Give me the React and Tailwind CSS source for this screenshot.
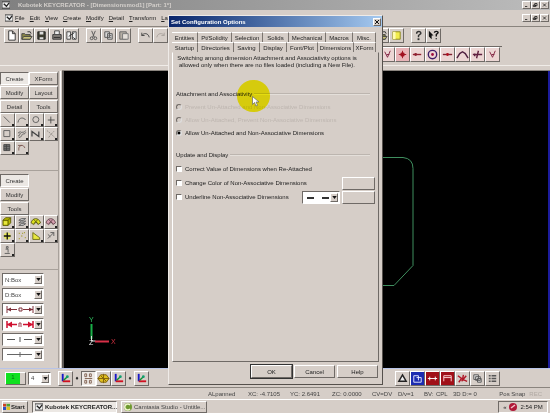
const EDGES = 'border border-t-white border-l-white border-r-[#6f6a66] border-b-[#6f6a66]';
const RAISED = `${EDGES} bg-[#d6cec8]`;
const SUNKEN = 'border border-t-[#6f6a66] border-l-[#6f6a66] border-r-white border-b-white';

const MENUS = ['File', 'Edit', 'View', 'Create', 'Modify', 'Detail', 'Transform', 'Layout'];

const TABS_BACK = [
  ['Entities', 'w-[26px]'],
  ['Pt/Solidity', 'w-[34px]'],
  ['Selection', 'w-[31px]'],
  ['Solids', 'w-[26px]'],
  ['Mechanical', 'w-[37px]'],
  ['Macros', 'w-[27px]'],
  ['Misc.', 'w-[23px]'],
];

const TABS_FRONT = [
  ['Startup', 'w-[26px]'],
  ['Directories', 'w-[36px]'],
  ['Saving', 'w-[26px]'],
  ['Display', 'w-[27px]'],
  ['Font/Plot', 'w-[31px]'],
  ['Dimensions', 'w-[36px]'],
  ['XForm', 'w-[22px]'],
];

// All glyphs are drawn on a 14x14 grid
const GLYPHS = {
  newFile: <path d="M4 2h4l3 3v7H4z M8 2v3h3" fill="#fff" stroke="#333" />,
  open: <><path d="M2 5h3l1 1h5v5H2z" fill="#8d8848" stroke="#444" /><path d="M4 8h9l-2 3H2z" fill="#c9c27a" stroke="#444" /><path d="M8 3h3l1 2" stroke="#333" fill="none" /></>,
  save: <><path d="M3 3h8v8H3z" fill="#3c3c30" stroke="#222" /><path d="M5 3h4v3H5z M5 9h4v2H5z" fill="#ddd" /></>,
  print: <><path d="M3 6h9v5H3z" fill="#8a8580" stroke="#333" /><path d="M5 2h5v4H5z" fill="#eee" stroke="#444" /><path d="M4 9h7" stroke="#222" /></>,
  pages: <><path d="M2 3h4v8H2z M8 3h4v8H8z" fill="#eee" stroke="#444" /><path d="M4 8l6-4M9 9l2 2" stroke="#333" /></>,
  cut: <><path d="M5 2l3 7M9 2L6 9" stroke="#555" fill="none" /><circle cx="5" cy="10" r="1.5" fill="none" stroke="#555" /><circle cx="9" cy="10" r="1.5" fill="none" stroke="#555" /></>,
  copy: <><path d="M3 3h5v6H3z M6 5h5v6H6z" fill="#d8d8d8" stroke="#555" /><path d="M7 7h3M7 9h3" stroke="#666" /></>,
  paste: <><path d="M3 3h7v8H3z" fill="#b5aea4" stroke="#666" /><path d="M6 5h6v6H6z" fill="#e5e0da" stroke="#777" /></>,
  undo: <path d="M3 7c2-3 7-3 8 2M3 4v3h3" stroke="#444" fill="none" />,
  redo: <path d="M11 7c-2-3-7-3-8 2M11 4v3H8" stroke="#aaa39d" fill="none" />,
  yellowPage: <><path d="M3 3h8v8H3z" fill="#f2ec4a" stroke="#8a8520" /><path d="M3 3h3v8H3z" fill="#fffbb0" /></>,
  help: <><path d="M5 5c0-3 5-3 4.500 0L7 7v2" stroke="#333" strokeWidth="1.500" fill="none" /><path d="M6 10h2v2H6z" fill="#333" /></>,
  whatsThis: <><path d="M2 2l5 5H5v4L2 8z" fill="#111" /><path d="M8 4c0-2 4-2 4 0L10 6v2M10 10v1" stroke="#111" strokeWidth="1.500" fill="none" /></>,
  snapPoint: <><circle cx="7" cy="7" r="2.500" fill="#a01020" /><path d="M7 3v8M3 7h8" stroke="#a01020" /></>,
  snapEnd: <><path d="M2 7h9" stroke="#902030" strokeWidth="1.500" /><circle cx="5" cy="7" r="1.500" fill="#902030" /></>,
  snapCircle: <><circle cx="7" cy="7" r="4.500" stroke="#40206a" fill="none" strokeWidth="1.500" /><circle cx="7" cy="7" r="1.500" fill="#a01040" /></>,
  snapMid: <><path d="M2 7h10" stroke="#802030" strokeWidth="1.500" /><circle cx="7" cy="7" r="1.500" fill="#b01020" /></>,
  snapCurve: <path d="M1 11l3-5 3-2 3 2 3 5" stroke="#502040" strokeWidth="1.500" fill="none" />,
  snapCross: <path d="M2 7h10M8 3L6 11M4 6v3" stroke="#602040" strokeWidth="1.500" fill="none" />,
  snapPerp: <path d="M4 4l3 6 3-7M6 7h3" stroke="#802040" fill="none" />,
  line: <path d="M3 3l7 7" stroke="#555" />,
  arc: <path d="M2 10c1-7 7-6 9-3" stroke="#555" fill="none" />,
  circle: <circle cx="6.500" cy="6.500" r="3.500" stroke="#555" fill="none" />,
  plus: <path d="M6.500 3v8M3 7h8" stroke="#444" />,
  rect: <path d="M3 3h7v7H3z" stroke="#555" fill="none" />,
  offset: <path d="M2 9c3 1 1-4 5-4s3-2 4-2M3 11c4 0 3-4 5-4s3-1 3-2M2 6l3-2" stroke="#555" fill="none" />,
  spline: <path d="M2 10V4l8 6V4" stroke="#444" strokeWidth="1.500" fill="none" />,
  points: <path d="M2 3l5 4 4-4M4 11l3-4 4 4" stroke="#8a8580" fill="none" strokeDasharray="2 1" />,
  hatch: <><path d="M3 3h7v7H3z" fill="#777" stroke="#444" /><path d="M3 5h7M3 8h7M6 3v7" stroke="#444" /></>,
  fillet: <path d="M3 10V7c1-4 6-4 7 0M2 4h5" stroke="#7a5550" fill="none" />,
  box: <><path d="M2 5l3-3h6v6l-3 3H2z" fill="#b8b800" stroke="#555500" /><path d="M2 5h6v6M8 5l3-3" stroke="#555500" fill="none" /><path d="M3 6h4v4H3z" fill="#e6e640" /></>,
  sheets: <path d="M3 5l3-2h5L8 5zM3 8l3-2h5L8 8zM3 11l3-2h5l-3 2z" fill="#ddd" stroke="#555" />,
  mesh: <><path d="M1 8c1-6 9-7 11 0l-3 2-2-3-3 3z" fill="#dce020" stroke="#555510" /><path d="M4 4l5 5M9 4L4 9" stroke="#555510" /></>,
  meshPink: <><path d="M1 8c1-6 9-7 11 0l-3 2-2-3-3 3z" fill="#d6a0b0" stroke="#60404a" /><path d="M4 4l5 5M9 4L4 9" stroke="#60404a" /></>,
  plusBold: <><circle cx="7" cy="7" r="4" fill="#e8e860" /><path d="M7 3v8M3 7h8" stroke="#111" strokeWidth="1.500" /></>,
  sparks: <path d="M3 4h1M9 3h1M6 7h1M3 10h1M10 9h1M7 4h1" stroke="#a09a20" strokeWidth="1.500" />,
  wedge: <path d="M3 3l8 6v2H3z" fill="#e8e840" stroke="#666610" />,
  arrowUp: <path d="M3 10l7-7M6 3h4v4M3 5l3 3" stroke="#555" fill="none" />,
  text: <path d="M6 3h2v2H6zM5 6h3v4M4 11h6" fill="none" stroke="#555" />,
  axes: <><path d="M4 2v8" stroke="#1818c8" strokeWidth="2" /><path d="M4 10h8" stroke="#d01020" strokeWidth="2" /><path d="M5 9l4-4" stroke="#109030" strokeWidth="1.500" /><circle cx="9" cy="5" r="1.500" fill="#10a070" /></>,
  grid: <path d="M3 2h2v3H3zM8 2h2v3H8zM3 9h2v3H3zM8 9h2v3H8zM3 7h8" fill="none" stroke="#806050" />,
  globe: <><path d="M1 7l3-4h6l3 4-3 4H4z" fill="#e0c020" stroke="#80600a" /><path d="M1 7h12M7 2v10M4 4l6 6" stroke="#80600a" /></>,
  triangle: <path d="M7 3l4 7H3z" fill="#eee" stroke="#222" strokeWidth="1.500" />,
  blueView: <><path d="M0 0h14v14H0z" fill="#1c2bb0" /><path d="M3 4h5v5M6 6h5v5H3V4" stroke="#e8ecff" fill="none" /></>,
  redView: <><path d="M0 0h14v14H0z" fill="#a01018" /><path d="M2 7h10M4 5v4M10 5v4" stroke="#fff" fill="none" /></>,
  redView2: <><path d="M0 0h14v14H0z" fill="#a01018" /><path d="M3 10V4h8v6M3 6h8" stroke="#ffd8d8" fill="none" /></>,
  redCross: <path d="M2 4l4 3-3 4M6 10l5-6M8 3l-1 5 5 2" stroke="#b01828" strokeWidth="1.500" fill="none" />,
  layers: <path d="M3 3h5v5H3zM5 5h5v4H5zM7 7h4v4H7z" fill="#ddd" stroke="#555" />,
  list: <path d="M3 4h2M6 4h5M3 7h2M6 7h5M3 10h2M6 10h5" stroke="#555" strokeWidth="1.500" />,
};

function Glyph({ name }) {
  return (
    <svg viewBox="0 0 14 14" className="block w-full h-full" aria-hidden="true">
      {GLYPHS[name]}
    </svg>
  );
}

function ToolButton({ name, look = RAISED, className = '' }) {
  return (
    <button aria-label={name} className={`shrink-0 w-[15px] h-[15px] ${look} ${className}`}>
      <Glyph name={name} />
    </button>
  );
}

function PaletteTab({ label, active }) {
  return (
    <button className={`h-[13px] text-center ${active ? `${SUNKEN} bg-[#ece8e4]` : RAISED}`}>
      {label}
    </button>
  );
}

function IconGrid({ names }) {
  return (
    <div className="grid grid-cols-4">
      {names.map((name) => (
        <button key={name} aria-label={name} className={`relative h-[14px] ${RAISED}`}>
          <Glyph name={name} />
          <span className="absolute right-0 bottom-0 w-[2px] h-[2px] bg-[#222]" />
        </button>
      ))}
    </div>
  );
}

function DropArrow() {
  return (
    <span className={`absolute right-px top-px bottom-px w-[8px] flex items-center justify-center pointer-events-none ${RAISED}`}>
      <svg viewBox="0 0 6 4" className="w-[5px] h-[3px]"><path d="M0 0h6L3 4z" fill="#111" /></svg>
    </span>
  );
}

function Combo({ label, value = '', children, className = '' }) {
  return (
    <div className={`relative bg-white ${SUNKEN} ${className}`}>
      <select aria-label={label} className="block appearance-none w-full h-full pl-[2px] bg-transparent text-[#444]">
        <option>{value}</option>
      </select>
      {children}
      <DropArrow />
    </div>
  );
}

function LineArt({ children }) {
  return (
    <svg viewBox="0 0 30 11" className="absolute left-[2px] top-0 w-[30px] h-[11px] pointer-events-none">
      {children}
    </svg>
  );
}

function WindowButtons() {
  return (
    <div className="flex">
      {['M2 6h3', 'M3 2h3v3H3zM1 4h3v2H1z', 'M2 2l4 4M6 2L2 6'].map((d) => (
        <button key={d} aria-label="window control" className={`w-[9px] h-[8px] ${RAISED}`}>
          <svg viewBox="0 0 8 8" className="block w-full h-full"><path d={d} stroke="#111" fill="none" /></svg>
        </button>
      ))}
    </div>
  );
}

function AppIcon() {
  return (
    <svg viewBox="0 0 9 9" className="w-[8px] h-[8px] shrink-0" aria-hidden="true">
      <path d="M0 1h9v7H0z" fill="#f2f2f2" stroke="#333" />
      <path d="M2 3l3 3 3-4" stroke="#222" fill="none" strokeWidth="1.500" />
    </svg>
  );
}

function Sidebar() {
  return (
    <aside className="w-[64px] shrink-0 flex border-r-2 border-[#5c5855] text-[#333]">
      <div className="w-[58px] pt-px flex flex-col">
        <div className="grid grid-cols-2 gap-y-px">
          <PaletteTab label="Create" active />
          <PaletteTab label="XForm" />
          <PaletteTab label="Modify" />
          <PaletteTab label="Layout" />
          <PaletteTab label="Detail" />
          <PaletteTab label="Tools" />
        </div>
        <IconGrid names={['line', 'arc', 'circle', 'plus', 'rect', 'offset', 'spline', 'points', 'hatch', 'fillet']} />
        <div className="mt-[15px] pt-[3px] border-t border-[#a8a19b]">
          <div className="w-[29px] grid gap-y-px">
            <PaletteTab label="Create" active />
            <PaletteTab label="Modify" />
            <PaletteTab label="Tools" />
          </div>
          <IconGrid names={['box', 'sheets', 'mesh', 'meshPink', 'plusBold', 'sparks', 'wedge', 'arrowUp', 'text']} />
        </div>
        <div className="mt-[12px] pt-[3px] pl-[2px] border-t border-[#a8a19b] flex flex-col gap-[2px]">
          <Combo label="Number format" value="N:Box" className="w-[42px] h-[13px]" />
          <Combo label="Dimension format" value="D:Box" className="w-[42px] h-[13px]" />
          <Combo label="Arrow style" className="w-[42px] h-[13px]">
            <LineArt><path d="M2 2v7M28 2v7M2 5.500h10M18 5.500h10M14 4h3v3h-3z" stroke="#80303a" fill="none" /><path d="M2 5.500l4-2v4zM28 5.500l-4-2v4z" fill="#80303a" /></LineArt>
          </Combo>
          <Combo label="Witness style" className="w-[42px] h-[13px]">
            <LineArt><path d="M2 2v7M28 2v7M2 5.500h10M18 5.500h10" stroke="#d01030" strokeWidth="1.500" fill="none" /><path d="M2 5.500l5-3v6zM28 5.500l-5-3v6z" fill="#d01030" /><path d="M14 8V4h2v4" stroke="#a04050" fill="none" /></LineArt>
          </Combo>
          <Combo label="Line type" className="w-[42px] h-[13px]">
            <LineArt><path d="M2 5.500h8M19 5.500h8M15 3v5" stroke="#555" /></LineArt>
          </Combo>
          <Combo label="Line width" className="w-[42px] h-[13px]">
            <LineArt><path d="M2 5.500h25M15 3v5" stroke="#666" /></LineArt>
          </Combo>
        </div>
      </div>
      <div className="w-[3px] border-l border-[#a8a19b] border-r border-r-white" />
    </aside>
  );
}

function Canvas() {
  return (
    <main className="relative flex-1 bg-black border-r-2 border-[#1c1c9c]">
      {/* Part outline */}
      <svg viewBox="0 0 100 140" className="absolute left-[256px] top-[80px] w-[100px] h-[140px]">
        <path d="M0 6.500h83q10 1 10 11v97l-19 20H0" fill="none" stroke="#3f8f5f" />
      </svg>
      {/* Axis triad */}
      <svg viewBox="0 0 32 34" className="absolute left-[22px] top-[243px] w-[32px] h-[34px]">
        <path d="M5.500 10v15" stroke="#18b048" strokeWidth="2" />
        <path d="M5.500 22v5h4" stroke="#ddd" fill="none" />
        <path d="M9 27.500h14" stroke="#d83048" strokeWidth="2" />
        <text x="3" y="8" fontSize="7" fill="#30c060">Y</text>
        <text x="3" y="31" fontSize="7" fill="#e8e8e8">Z</text>
        <text x="25" y="30" fontSize="7" fill="#d03040">X</text>
      </svg>
    </main>
  );
}

function TabRow({ tabs, active }) {
  return (
    <div className="flex h-[10px]" role="tablist">
      {tabs.map(([label, width]) => (
        <button
          key={label}
          role="tab"
          aria-selected={label === active}
          className={`${width} h-full text-center border-t border-t-white border-r border-r-[#7b7570] whitespace-nowrap leading-[8px]`}
        >
          {label}
        </button>
      ))}
    </div>
  );
}

function GroupTitle({ children }) {
  return (
    <div className="flex items-center gap-[2px] h-[8px]">
      <span>{children}</span>
      <span className="flex-1 border-t border-[#bcb5af] border-b border-b-[#e4dfda]" />
    </div>
  );
}

function Radio({ label, disabled, checked }) {
  return (
    <label className={`flex items-center gap-[3px] h-[8px] ${disabled ? 'text-[#beb6b0]' : ''}`}>
      <input
        type="radio"
        name="attach"
        disabled={disabled}
        defaultChecked={checked}
        className="appearance-none w-[6px] h-[6px] rounded-full bg-white border border-t-[#6f6a66] border-l-[#6f6a66] border-r-[#ddd] border-b-[#ddd] disabled:bg-[#d6cec8] checked:bg-[radial-gradient(#000_1px,#fff_2px)]"
      />
      {label}
    </label>
  );
}

function Check({ label }) {
  return (
    <label className="flex items-center gap-[3px] h-[8px]">
      <input type="checkbox" className={`appearance-none w-[6px] h-[6px] bg-white ${SUNKEN}`} />
      {label}
    </label>
  );
}

function OptionsDialog() {
  return (
    <div role="dialog" aria-label="Set Configuration Options" className="absolute left-[168px] top-[15px] w-[215px] h-[370px] flex flex-col bg-[#d6cec8] border border-t-[#efebe8] border-l-[#efebe8] border-r-[#55504c] border-b-[#55504c]">
      <div className="h-[11px] pl-[2px] pr-px flex items-center justify-between text-white font-bold bg-linear-to-r from-[#0a246a] to-[#a6caf0]">
        <span>Set Configuration Options</span>
        <button aria-label="Close" className={`w-[8px] h-[8px] ${RAISED}`}>
          <svg viewBox="0 0 6 6" className="block w-full h-full"><path d="M1 1l4 4M5 1L1 5" stroke="#111" /></svg>
        </button>
      </div>
      <div className="flex-1 flex flex-col px-[3px] pt-[5px]">
        <TabRow tabs={TABS_BACK} />
        <TabRow tabs={TABS_FRONT} active="Dimensions" />
        <div className="flex-1 px-[3px] border border-t-transparent border-l-white border-r-[#6f6a66] border-b-[#6f6a66]">
          <p className="w-[182px] pt-[2px] text-center leading-[7px] whitespace-nowrap">
            Switching among dimension Attachment and Associativity options is
            <br />
            allowed only when there are no files loaded (including a New File).
          </p>
          <div className="mt-[21px] flex flex-col gap-[5px] pr-[5px]">
            <GroupTitle>Attachment and Associativity</GroupTitle>
            <Radio label="Prevent Un-Attached and Non-Associative Dimensions" disabled />
            <Radio label="Allow Un-Attached, Prevent Non-Associative Dimensions" disabled />
            <Radio label="Allow Un-Attached and Non-Associative Dimensions" checked />
          </div>
          <div className="mt-[14px] pr-[5px]">
            <GroupTitle>Update and Display</GroupTitle>
          </div>
          <div className="mt-[6px] flex flex-col">
            <Check label="Correct Value of Dimensions when Re-Attached" />
            <div className="h-[14px] mt-[3px] flex items-center justify-between">
              <Check label="Change Color of Non-Associative Dimensions" />
              <button aria-label="Pick color" className={`w-[33px] h-[13px] ${RAISED}`} />
            </div>
            <div className="h-[14px] flex items-center">
              <Check label="Underline Non-Associative Dimensions" />
              <Combo label="Underline style" className="ml-auto w-[38px] h-[13px]">
                <LineArt><path d="M2 6h7M17 6h7" stroke="#333" strokeWidth="2" /></LineArt>
              </Combo>
              <button aria-label="Pick underline" className={`ml-[2px] w-[33px] h-[13px] ${RAISED}`} />
            </div>
          </div>
        </div>
      </div>
      <div className="flex justify-end gap-[2px] pt-[3px] pb-[6px] px-[4px]">
        <button className={`w-[41px] h-[13px] outline outline-[#333] ${RAISED}`}>OK</button>
        <button className={`w-[41px] h-[13px] ${RAISED}`}>Cancel</button>
        <button className={`w-[41px] h-[13px] ${RAISED}`}>Help</button>
      </div>
    </div>
  );
}

function StatusBar() {
  return (
    <div className="h-[12px] pl-[208px] pr-[8px] flex items-center border-t border-[#8a847e] text-[#444] whitespace-nowrap">
      <span className="w-[40px]">ALpanned</span>
      <span className="w-[42px]">XC: -4.7105</span>
      <span className="w-[42px]">YC: 2.6491</span>
      <span className="w-[40px]">ZC: 0.0000</span>
      <span className="w-[26px]">CV=DV</span>
      <span className="w-[26px]">D/v=1</span>
      <span className="w-[12px]">BV:</span>
      <span className="w-[17px]">CPL</span>
      <span>3D D:= 0</span>
      <span className="ml-auto">Pos Snap</span>
      <span className="ml-[4px] text-[#b0a9a3]">REC</span>
    </div>
  );
}

function Taskbar() {
  return (
    <footer className="h-[14px] px-[2px] flex items-center gap-[4px] border-t border-white whitespace-nowrap">
      <button className={`w-[26px] h-[12px] flex items-center gap-px font-bold ${RAISED}`}>
        <svg viewBox="0 0 8 8" className="w-[7px] h-[7px]">
          <path d="M0 1h3.500v3H0z" fill="#d04020" /><path d="M4 1h4v3H4z" fill="#50a030" />
          <path d="M0 4.500h3.500V8H0z" fill="#3050c0" /><path d="M4 4.500h4V8H4z" fill="#e0c020" />
        </svg>
        Start
      </button>
      <button className={`w-[85px] h-[12px] pl-[2px] flex items-center gap-[2px] font-bold bg-[#ece8e4] ${SUNKEN}`}>
        <AppIcon />
        Kubotek KEYCREATOR...
      </button>
      <button className={`w-[86px] h-[12px] pl-[2px] flex items-center gap-[2px] text-[#444] ${RAISED}`}>
        <svg viewBox="0 0 8 8" className="w-[8px] h-[8px]">
          <circle cx="4" cy="4" r="4" fill="#6f9a30" /><path d="M6 2a3 3 0 1 0 0 4" stroke="#f0f4d0" strokeWidth="1.500" fill="none" />
        </svg>
        Camtasia Studio - Untitle...
      </button>
      <div className={`ml-auto w-[50px] h-[12px] flex items-center justify-center gap-[3px] ${SUNKEN}`}>
        <span>«</span>
        <svg viewBox="0 0 8 8" className="w-[8px] h-[8px]">
          <circle cx="4" cy="4" r="4" fill="#b01838" /><path d="M2 5l4-3" stroke="#f0c0c8" strokeWidth="1.500" />
        </svg>
        <span>2:54 PM</span>
      </div>
    </footer>
  );
}

export default function App() {
  return (
    <div className="relative min-h-screen flex flex-col overflow-hidden bg-[#d6cec8] text-[6px] leading-[8px] text-[#222] font-['Liberation_Sans',sans-serif]">
      <header className="h-[10px] pl-[2px] pr-px flex items-center gap-[8px] bg-linear-to-r from-[#808080] to-[#bcbcbc] text-[#d4d0cc] font-bold">
        <AppIcon />
        <span className="flex-1">Kubotek KEYCREATOR - [Dimensionsmod1] [Part: 1*]</span>
        <WindowButtons />
      </header>
      <nav className="h-[17px] pl-[5px] pr-px flex items-center gap-[2px] border-b border-[#8a847e]">
        <AppIcon />
        <div className="flex-1 flex gap-[5px]">
          {MENUS.map((m) => (
            <button key={m}><span className="underline">{m[0]}</span>{m.slice(1)}</button>
          ))}
        </div>
        <WindowButtons />
      </nav>

      {/* Toolbars */}
      <div className="h-[17px] pl-[4px] pr-[109px] flex items-center">
        {['newFile', 'open', 'save', 'print', 'pages'].map((n) => <ToolButton key={n} name={n} />)}
        <div className="flex ml-[7px]">
          {['cut', 'copy', 'paste'].map((n) => <ToolButton key={n} name={n} />)}
        </div>
        <div className="flex ml-[7px]">
          {['undo', 'redo'].map((n) => <ToolButton key={n} name={n} />)}
        </div>
        <ToolButton name="open" className="ml-auto" />
        <ToolButton name="yellowPage" />
        <ToolButton name="help" className="ml-[7px]" />
        <ToolButton name="whatsThis" />
      </div>
      <div className="h-[22px] pr-[48px] pt-[2px] flex justify-end border-b border-[#f0ece8]">
        <div className="flex h-[17px] border-t border-[#6f6a66] pr-[2px]">
          {['snapPerp', 'snapPoint', 'snapEnd', 'snapCircle', 'snapMid', 'snapCurve', 'snapCross', 'snapPerp'].map((n, i) => (
            <ToolButton key={i} name={n} look={i === 1 ? `${EDGES} bg-[#e8b4b8]` : `${EDGES} bg-[#ecd6d4]`} />
          ))}
        </div>
      </div>
      <div className="h-[5px] ml-[62px] border-b border-[#8a847e]" />

      <div className="flex-1 flex">
        <Sidebar />
        <Canvas />
      </div>

      <div className="h-[19px] pl-[5px] pr-[50px] flex items-center border-t border-[#b8c4e8]">
        <button aria-label="Current color" className={`w-[21px] h-[13px] flex ${RAISED}`}>
          <span className="w-[14px] h-full bg-[#10e020] text-[#087010]">1</span>
        </button>
        <Combo label="Level" value="4" className="ml-[2px] w-[23px] h-[13px]" />
        <ToolButton name="axes" className="ml-[7px]" />
        <span className="w-[8px] text-center">♦</span>
        <ToolButton name="grid" look={`${SUNKEN} bg-[#eeeae6]`} />
        <ToolButton name="globe" />
        <ToolButton name="axes" />
        <span className="w-[8px] text-center">♦</span>
        <ToolButton name="axes" />
        <ToolButton name="triangle" className="ml-auto" />
        {['blueView', 'redView', 'redView2', 'redCross', 'layers', 'list'].map((n) => <ToolButton key={n} name={n} />)}
      </div>
      <StatusBar />
      <Taskbar />

      <OptionsDialog />

      {/* Highlighted mouse pointer */}
      <div className="absolute left-[237px] top-[80px] w-[33px] h-[32px] rounded-full bg-[#fffc10] mix-blend-multiply pointer-events-none" />
      <svg viewBox="0 0 8 11" className="absolute left-[252px] top-[96px] w-[8px] h-[11px] pointer-events-none">
        <path d="M.5.5v8l2-2 1.500 3.500 1.500-.7L4 6h3z" fill="#fff" stroke="#666" strokeWidth=".7" />
      </svg>
    </div>
  );
}
